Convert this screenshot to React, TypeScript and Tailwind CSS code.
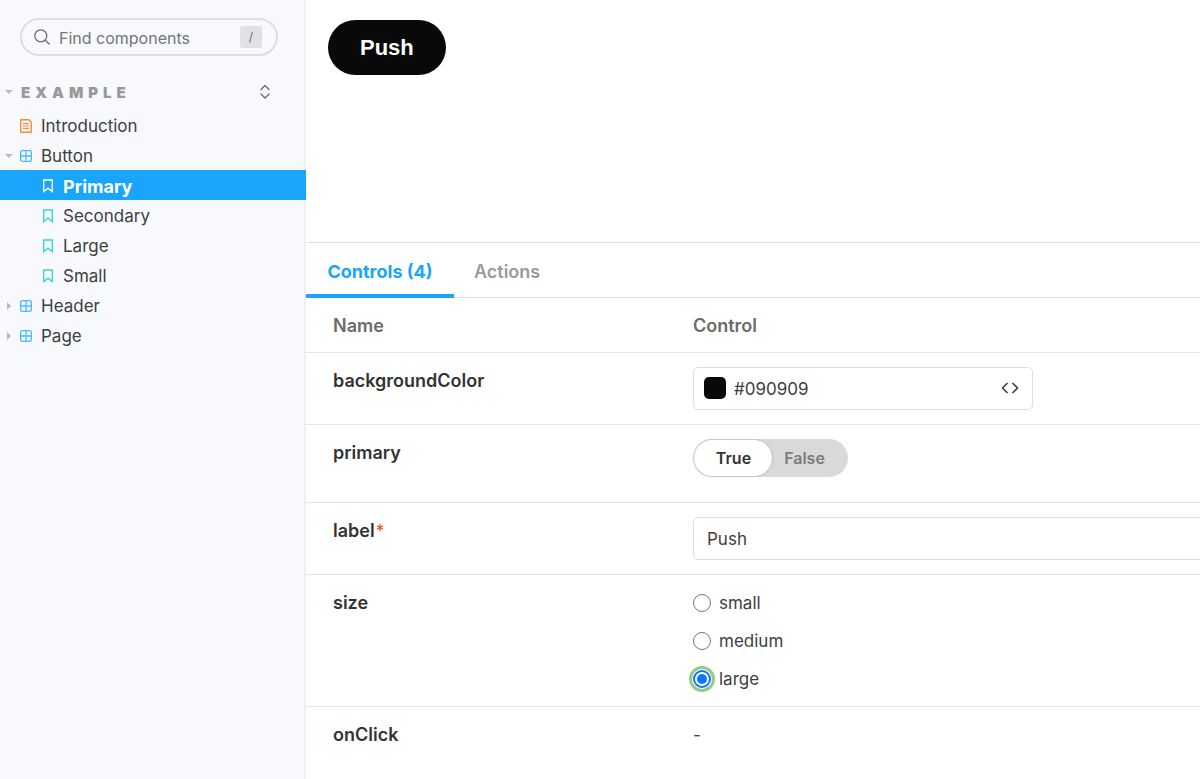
import { useState, type ReactNode } from "react";

function SearchIcon() {
  return (
    <svg className="size-4 shrink-0 text-[#6b6b6b]" viewBox="0 0 16 16" fill="none" stroke="currentColor" strokeWidth="1.3" strokeLinecap="round" aria-hidden="true">
      <circle cx="6.8" cy="6.8" r="6" />
      <path d="M11.2 11.2l4 3.8" />
    </svg>
  );
}

function DocumentIcon() {
  return (
    <svg className="h-[14px] w-3 shrink-0 text-[#ff8a33]" viewBox="0 0 12 14" fill="none" stroke="currentColor" aria-hidden="true">
      <path strokeWidth="1.4" strokeLinejoin="round" d="M.7.7h8.1l2.5 2.5v10.1H.7z" />
      <path strokeWidth="1.2" d="M3 4.6h6M3 7h6M3 9.4h6" />
    </svg>
  );
}

function ComponentIcon() {
  return (
    <svg className="size-3 shrink-0 text-[#4bb8fb]" viewBox="0 0 12 12" fill="none" stroke="currentColor" strokeWidth="1.3" aria-hidden="true">
      <rect x=".65" y=".65" width="10.7" height="10.7" rx="2" />
      <path d="M6 .6v10.8M.6 6h10.8" />
    </svg>
  );
}

function BookmarkIcon() {
  return (
    <svg className="h-[14px] w-[10px] shrink-0" viewBox="0 0 10 14" fill="none" stroke="currentColor" strokeWidth="1.4" aria-hidden="true">
      <path d="M.7 1h8.6v11.6L5 9.2.7 12.6z" />
    </svg>
  );
}

function Caret({ open }: { open?: boolean }) {
  return (
    <svg className="size-2 shrink-0 text-[#b8babd]" viewBox="0 0 8 8" fill="currentColor" aria-hidden="true">
      {open ? <path d="M0 2h8L4 6z" /> : <path d="M2 0v8l4-4z" />}
    </svg>
  );
}

type Node = { name: string; kind: "doc" | "component"; state?: "open" | "closed" };

function TreeRow({ name, kind, state }: Node) {
  return (
    <a href="#" aria-expanded={state ? state === "open" : undefined} className="flex h-[30px] items-center pt-[2px] pl-[5px]">
      <span className="flex w-[15px] items-center">{state && <Caret open={state === "open"} />}</span>
      <span className="flex w-[21px] items-center">{kind === "doc" ? <DocumentIcon /> : <ComponentIcon />}</span>
      <span className="pt-px">{name}</span>
    </a>
  );
}

function StoryRow({ name, active, onSelect }: { name: string; active: boolean; onSelect: () => void }) {
  return (
    <a
      href="#"
      aria-current={active ? "page" : undefined}
      onClick={(e) => {
        e.preventDefault();
        onSelect();
      }}
      className={
        active
          ? "flex h-[30px] items-center gap-[10px] bg-[#18a5fb] pt-[2px] pl-[43px] text-[18px] font-bold text-white"
          : "flex h-[30px] items-center gap-[10px] pt-[2px] pl-[43px]"
      }
    >
      <span className={active ? "text-white" : "text-[#37d5d3]"}>
        <BookmarkIcon />
      </span>
      <span className="pt-px">{name}</span>
    </a>
  );
}

function Sidebar() {
  const [story, setStory] = useState("Primary");
  return (
    <aside className="w-[306px] shrink-0 border-r-2 border-[#eeeff3] bg-[#f7f9fd]">
      <label className="mt-[18px] mr-[26px] ml-5 flex h-[38px] items-center gap-[9px] rounded-full border-2 border-[#dcdee1] pr-[14px] pl-3">
        <SearchIcon />
        <input type="search" aria-label="Find components" placeholder="Find components" className="min-w-0 flex-1 bg-transparent pt-px text-[16px] outline-none placeholder:text-[#737577]" />
        <kbd className="flex size-[22px] items-center justify-center rounded-[3px] bg-[#dfe1e4] font-[Inter,sans-serif] text-[12px] text-[#6b6d70]">/</kbd>
      </label>
      <div className="mt-[21px] flex h-[30px] items-center pr-[34px] pl-[5px]">
        <button type="button" aria-expanded="true" className="flex flex-1 items-center gap-2 text-[15px] font-black tracking-[5px] text-[#999999]">
          <Caret open />
          <span className="pt-[2px]">EXAMPLE</span>
        </button>
        <button type="button" aria-label="Expand all" className="text-[#6b6d70]">
          <svg className="h-4 w-[10px]" viewBox="0 0 10 16" fill="none" stroke="currentColor" strokeWidth="1.4" strokeLinecap="round" strokeLinejoin="round" aria-hidden="true">
            <path d="M1 5.400l4-4 4 4M1 10l4 4 4-4" />
          </svg>
        </button>
      </div>
      <nav aria-label="Stories" className="-mr-[2px] mt-[3px] text-[17px] text-[#3d3f42]">
        <TreeRow name="Introduction" kind="doc" />
        <TreeRow name="Button" kind="component" state="open" />
        {["Primary", "Secondary", "Large", "Small"].map((name) => (
          <StoryRow key={name} name={name} active={story === name} onSelect={() => setStory(name)} />
        ))}
        <TreeRow name="Header" kind="component" state="closed" />
        <TreeRow name="Page" kind="component" state="closed" />
      </nav>
    </aside>
  );
}

function Row({ name, required, htmlFor, children }: { name: string; required?: boolean; htmlFor?: string; children: ReactNode }) {
  return (
    <tr className="border-t border-[#e4e4e4] align-top">
      <th scope="row" className="pt-4 pl-[27px] text-left text-[18px] leading-6 font-semibold text-[#333333]">
        <label htmlFor={htmlFor}>{name}</label>
        {required && <span className="ml-px text-[17px] font-normal text-[#ff4400]">*</span>}
      </th>
      {children}
    </tr>
  );
}

function Controls() {
  const [color, setColor] = useState("#090909");
  const [primary, setPrimary] = useState(true);
  const [label, setLabel] = useState("Push");
  const [size, setSize] = useState("large");
  const on = "h-9 w-[78px] rounded-full bg-white pl-px text-[#333333] shadow-[0_0_2px_rgba(0,0,0,0.3)]";
  const off = "h-9 flex-1 rounded-full pr-[10px] text-[#7b7b7b]";
  return (
    <table className="w-[calc(100%+40px)] table-fixed border-collapse text-[17px] leading-6 text-[#404040]">
      <colgroup>
        <col className="w-[387px]" />
        <col />
      </colgroup>
      <thead>
        <tr className="h-[54px] text-left text-[18px] leading-6 text-[#6b6b6b]">
          <th scope="col" className="pt-[2px] pl-[27px] font-semibold">Name</th>
          <th scope="col" className="pt-[2px] font-semibold">Control</th>
        </tr>
      </thead>
      <tbody>
        <Row name="backgroundColor" htmlFor="color">
          <td className="py-[14px]">
            <div className="flex h-[43px] w-[340px] items-center rounded-[5px] border border-[#dfdfdf] px-[10px]">
              <span className="size-[22px] shrink-0 rounded-[5px]" style={{ backgroundColor: color }} />
              <input id="color" value={color} onChange={(e) => setColor(e.target.value)} className="min-w-0 flex-1 pt-[2px] pl-2 outline-none" />
              <button type="button" aria-label="Change format" className="px-[3px]">
                <svg className="h-3 w-[18px]" viewBox="0 0 18 12" fill="none" stroke="currentColor" strokeWidth="1.7" strokeLinecap="round" strokeLinejoin="round" aria-hidden="true">
                  <path d="M6 1.5L1.5 6 6 10.500M12 1.500L16.500 6 12 10.500" />
                </svg>
              </button>
            </div>
          </td>
        </Row>
        <Row name="primary">
          <td className="pt-[14px] pb-[25px]">
            <div role="group" aria-label="primary" className="flex h-[38px] w-[155px] items-center rounded-full bg-[#d9d9d9] px-px text-[16px] font-semibold">
              <button type="button" aria-pressed={primary} onClick={() => setPrimary(true)} className={primary ? on : off}>True</button>
              <button type="button" aria-pressed={!primary} onClick={() => setPrimary(false)} className={primary ? off : on}>False</button>
            </div>
          </td>
        </Row>
        <Row name="label" required htmlFor="label">
          <td className="py-[14px]">
            <input id="label" value={label} onChange={(e) => setLabel(e.target.value)} className="block h-[43px] w-full rounded-[5px] border border-[#dfdfdf] px-[13px] pt-[2px] outline-none" />
          </td>
        </Row>
        <Row name="size">
          <td className="pt-4 pb-[15px]">
            <div role="radiogroup" aria-label="size" className="flex flex-col items-start gap-[14px]">
              {["small", "medium", "large"].map((option) => (
                <label key={option} className="flex items-center gap-2">
                  <input
                    type="radio"
                    name="size"
                    checked={size === option}
                    onChange={() => setSize(option)}
                    className="size-[18px] appearance-none rounded-full border border-[#767676] bg-white checked:border-2 checked:border-[#0a75ff] checked:bg-[#0a75ff] checked:bg-clip-content checked:p-[2px] checked:outline-3 checked:outline-offset-1 checked:outline-[#94cb87]"
                  />
                  {option}
                </label>
              ))}
            </div>
          </td>
        </Row>
        <Row name="onClick">
          <td className="pt-4">-</td>
        </Row>
      </tbody>
    </table>
  );
}

export default function App() {
  return (
    <div className="flex min-h-screen overflow-hidden bg-white font-[Inter,sans-serif]">
      <Sidebar />
      <main className="min-w-0 flex-1">
        <section aria-label="Preview" className="h-[242px] px-[22px] pt-5">
          <button type="button" className="h-[55px] rounded-full bg-[#090909] px-8 pt-px font-['Liberation_Sans',sans-serif] text-[22px] leading-none font-bold text-white">Push</button>
        </section>
        <div role="tablist" className="flex h-[56px] border-t border-b border-[#e0e0e0] text-[18px]">
          <button type="button" role="tab" aria-selected="true" className="-mb-px w-[148px] border-b-4 border-[#18a5fb] pt-[6px] font-bold text-[#18a5fb]">Controls (4)</button>
          <button type="button" role="tab" aria-selected="false" className="px-5 pt-[3px] font-semibold text-[#999999]">Actions</button>
        </div>
        <Controls />
      </main>
    </div>
  );
}
